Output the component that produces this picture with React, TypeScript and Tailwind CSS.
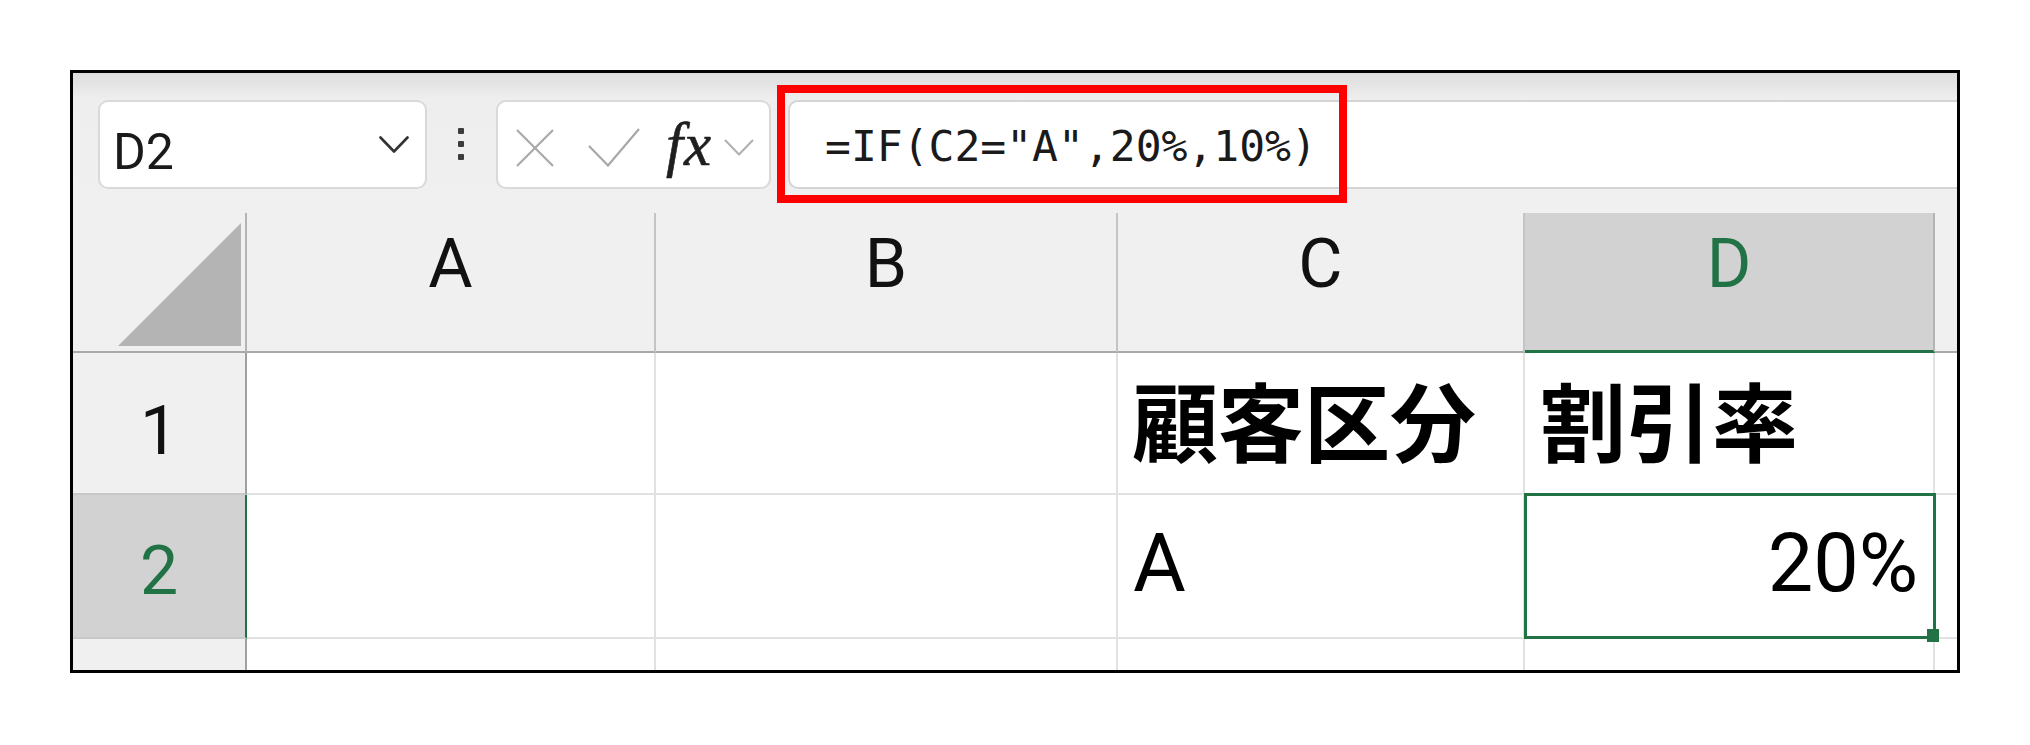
import React from "react";

function Chevron({ color, w, h, sw }: { color: string; w: number; h: number; sw: number }) {
  return (
    <svg width={w} height={h} viewBox={`0 0 ${w} ${h}`} fill="none">
      <polyline points={`1.5,1.5 ${w / 2},${h - 1.5} ${w - 1.5},1.5`} stroke={color} strokeWidth={sw} strokeLinecap="round" strokeLinejoin="round" />
    </svg>
  );
}

export default function App() {
  return (
    <div className="w-[2030px] h-[745px] bg-white overflow-hidden pt-[70px] pl-[70px] font-['Roboto',sans-serif]">
      <div className="relative w-[1890px] h-[603px] border-[3px] border-black flex flex-col overflow-hidden">
        {/* Toolbar */}
        <div className="h-[140px] shrink-0 flex items-start pt-[27px] pl-[25px] bg-gradient-to-b from-[#dcdcdc] via-[#eeeeee] via-[18%] to-[#f0f0f0]">
          {/* Name box */}
          <div className="w-[329px] h-[89px] shrink-0 bg-white border-2 border-[#d9d9d9] rounded-[10px] flex items-center justify-between pl-[13px] pr-[16px]">
            <span className="text-[50px] leading-none text-[#1a1a1a] pt-[14px]">D2</span>
            <Chevron color="#333333" w={30} h={17} sw={2.6} />
          </div>
          {/* Dots */}
          <div className="ml-[31px] mt-[28px] w-[6px] flex flex-col gap-[7px] shrink-0">
            <div className="w-[6px] h-[6px] rounded-[1px] bg-[#3c3c3c]" />
            <div className="w-[6px] h-[6px] rounded-[1px] bg-[#3c3c3c]" />
            <div className="w-[6px] h-[6px] rounded-[1px] bg-[#3c3c3c]" />
          </div>
          {/* Formula buttons */}
          <div className="ml-[32px] w-[275px] h-[89px] shrink-0 bg-white border-2 border-[#d9d9d9] rounded-[10px] flex items-center pl-[18px]">
            <svg width="38" height="38" viewBox="0 0 38 38" fill="none" className="mt-[7px]">
              <line x1="1" y1="1" x2="37" y2="37" stroke="#a8a8a8" strokeWidth="2.2" />
              <line x1="37" y1="1" x2="1" y2="37" stroke="#a8a8a8" strokeWidth="2.2" />
            </svg>
            <svg width="52" height="39" viewBox="0 0 52 39" fill="none" className="ml-[34px] mt-[5px]">
              <polyline points="1,18 20,37.5 51,1" stroke="#a8a8a8" strokeWidth="2.2" fill="none" />
            </svg>
            <span className="ml-[26px] text-[61px] leading-none italic text-[#1f1f1f] font-['Liberation_Serif',serif] tracking-[1px] [-webkit-text-stroke:0.6px_#1f1f1f]">fx</span>
            <div className="ml-[12px] mt-[6px]">
              <Chevron color="#b0b0b0" w={30} h={17} sw={2} />
            </div>
          </div>
          {/* Formula input */}
          <div className="ml-[17px] flex-1 h-[89px] bg-white border-y-2 border-l-2 border-[#d4d4d4] rounded-l-[10px] flex items-center pl-[35px]">
            <span className="text-[43px] leading-none text-[#1a1a1a] font-['DejaVu_Sans_Mono',monospace] pt-[4px] whitespace-pre">=IF(C2="A",20%,10%)</span>
          </div>
        </div>

        {/* Grid */}
        <div className="flex-1 grid grid-cols-[174px_409px_462px_407px_410px_1fr] grid-rows-[140px_142px_144px_1fr]">
          {/* Header row */}
          <div className="bg-[#f0f0f0] border-r-2 border-b-2 border-r-[#b4b4b4] border-b-[#a9a9a9] flex items-end justify-end pr-[4px] pb-[5px]">
            <svg width="123" height="123" viewBox="0 0 123 123">
              <polygon points="123,0 123,123 0,123" fill="#b4b4b4" />
            </svg>
          </div>
          <div className="bg-[#f0f0f0] border-r-2 border-b-2 border-r-[#c4c4c4] border-b-[#a9a9a9] flex justify-center pt-[17px]">
            <span className="text-[68px] leading-none text-[#111111]">A</span>
          </div>
          <div className="bg-[#f0f0f0] border-r-2 border-b-2 border-r-[#c4c4c4] border-b-[#a9a9a9] flex justify-center pt-[17px]">
            <span className="text-[68px] leading-none text-[#111111]">B</span>
          </div>
          <div className="bg-[#f0f0f0] border-r-2 border-b-2 border-r-[#c4c4c4] border-b-[#a9a9a9] flex justify-center pt-[17px]">
            <span className="text-[68px] leading-none text-[#111111]">C</span>
          </div>
          <div className="bg-[#d2d2d2] border-r-2 border-b-[3px] border-r-[#b4b4b4] border-b-[#217346] flex justify-center pt-[17px]">
            <span className="text-[68px] leading-none text-[#217346]">D</span>
          </div>
          <div className="bg-[#f0f0f0] border-b-2 border-b-[#a9a9a9]" />

          {/* Row 1 */}
          <div className="bg-[#f0f0f0] border-r-2 border-b-2 border-r-[#a0a0a0] border-b-[#c8c8c8] flex items-center justify-center pt-[16px]">
            <span className="text-[68px] leading-none text-[#111111]">1</span>
          </div>
          <div className="bg-white border-r-2 border-b-2 border-[#e1e1e1]" />
          <div className="bg-white border-r-2 border-b-2 border-[#e1e1e1]" />
          <div className="bg-white border-r-2 border-b-2 border-[#e1e1e1] flex items-center pl-[14px] pb-[8px]">
            <span className="text-[86px] leading-none font-bold text-black font-['Noto_Sans_CJK_JP',sans-serif] whitespace-nowrap">顧客区分</span>
          </div>
          <div className="bg-white border-r-2 border-b-2 border-[#e1e1e1] flex items-center pl-[15px] pb-[8px]">
            <span className="text-[86px] leading-none font-bold text-black font-['Noto_Sans_CJK_JP',sans-serif] whitespace-nowrap">割引率</span>
          </div>
          <div className="bg-white border-b-2 border-[#e1e1e1]" />

          {/* Row 2 */}
          <div className="bg-[#d2d2d2] border-r-2 border-b-2 border-r-[#217346] border-b-[#c8c8c8] flex items-center justify-center pt-[9px]">
            <span className="text-[68px] leading-none text-[#217346]">2</span>
          </div>
          <div className="bg-white border-r-2 border-b-2 border-[#e1e1e1]" />
          <div className="bg-white border-r-2 border-b-2 border-[#e1e1e1]" />
          <div className="bg-white border-r-2 border-b-2 border-[#e1e1e1] flex items-center pl-[15px] pb-[5px]">
            <span className="text-[81px] leading-none text-black">A</span>
          </div>
          <div className="bg-white border-r-2 border-b-2 border-[#e1e1e1] flex items-center justify-end pr-[15px] pb-[5px]">
            <span className="text-[81px] leading-none text-black">20%</span>
          </div>
          <div className="bg-white border-b-2 border-[#e1e1e1]" />

          {/* Row 3 (partial) */}
          <div className="bg-[#f0f0f0] border-r-2 border-r-[#a0a0a0]" />
          <div className="bg-white border-r-2 border-[#e1e1e1]" />
          <div className="bg-white border-r-2 border-[#e1e1e1]" />
          <div className="bg-white border-r-2 border-[#e1e1e1]" />
          <div className="bg-white border-r-2 border-[#e1e1e1]" />
          <div className="bg-white" />
        </div>

        {/* Selection box D2 */}
        <div className="absolute left-[1451px] top-[420px] w-[412px] h-[146px] border-[3px] border-[#217346] pointer-events-none" />
        {/* Fill handle */}
        <div className="absolute left-[1854px] top-[556px] w-[12px] h-[13px] bg-[#217346]" />
        {/* Red highlight */}
        <div className="absolute left-[704px] top-[12px] w-[570px] h-[118px] border-[8px] border-[#ff0000] pointer-events-none" />
      </div>
    </div>
  );
}
